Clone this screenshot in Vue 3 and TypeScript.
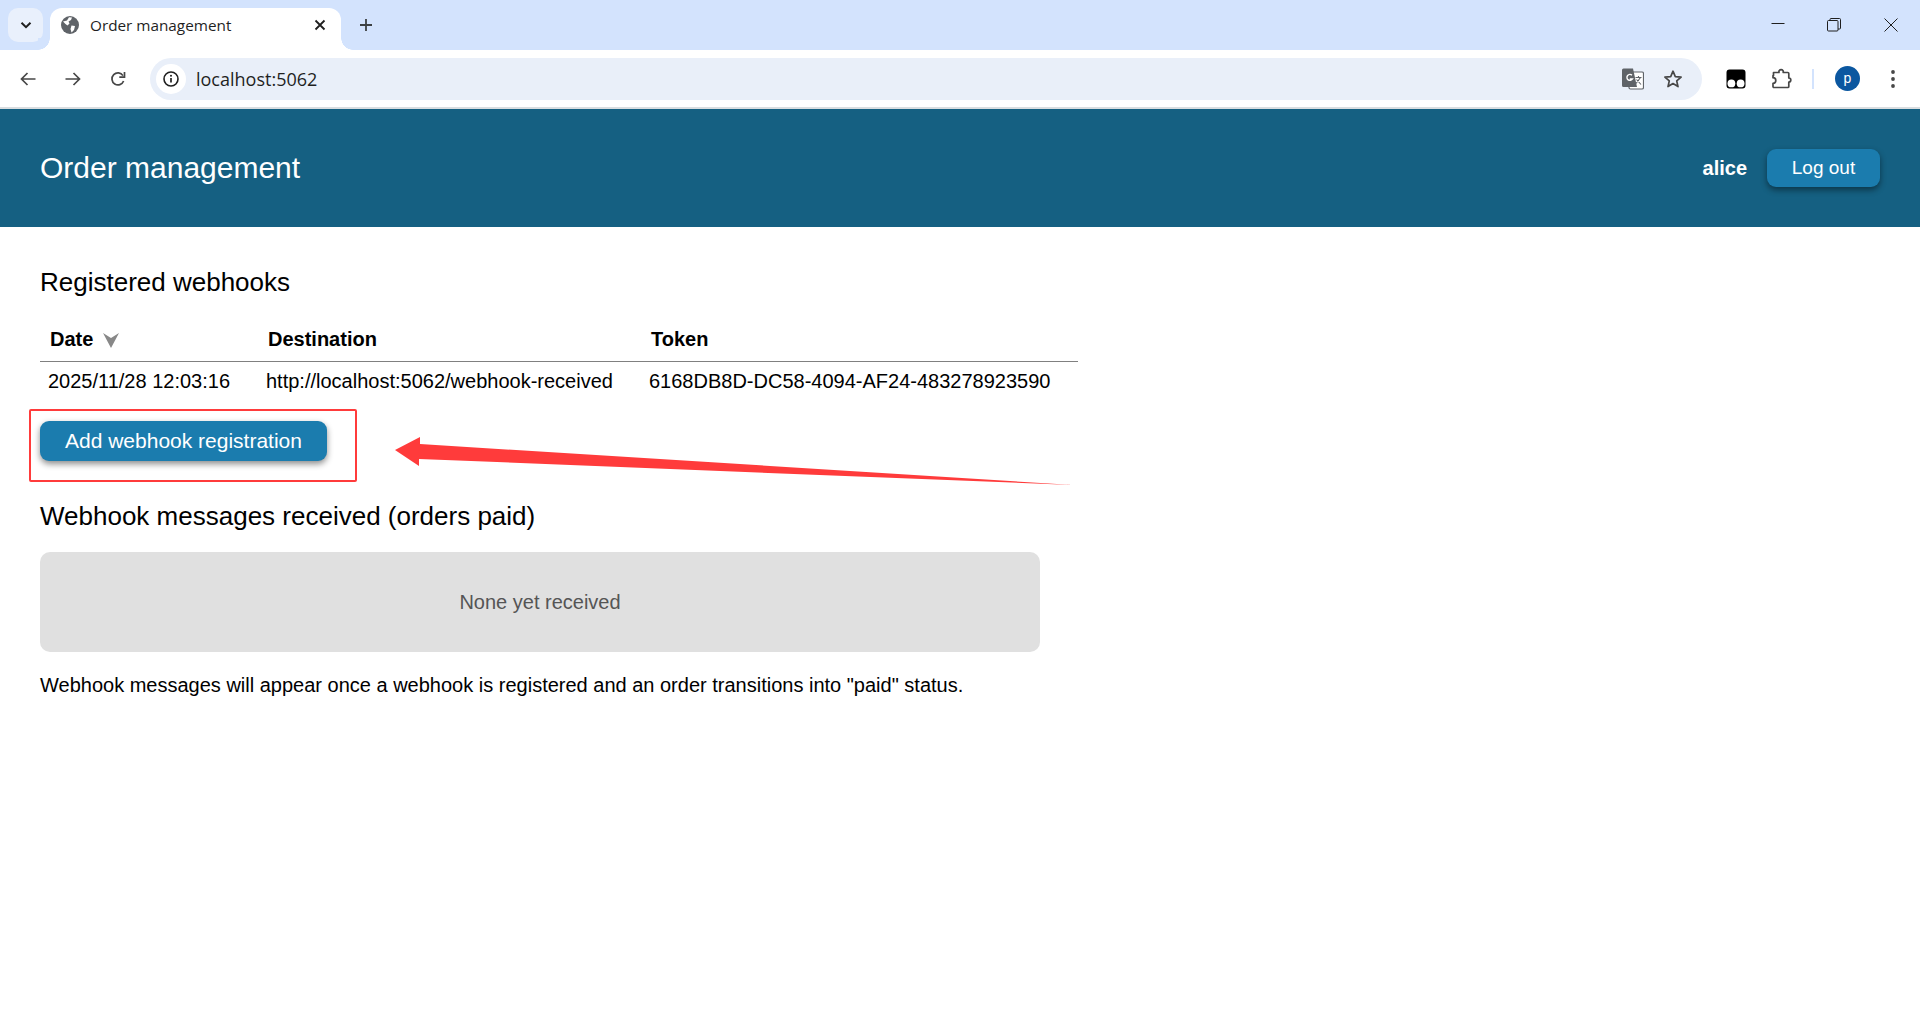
<script setup lang="ts">
const headers: string[] = ['Destination', 'Token']
const row = {
  date: '2025/11/28 12:03:16',
  destination: 'http://localhost:5062/webhook-received',
  token: '6168DB8D-DC58-4094-AF24-483278923590',
}
</script>

<template>
  <div class="page">
    <div class="tabstrip">
      <div class="tab-switch">
        <svg width="16" height="16" viewBox="0 0 16 16"><path d="M3.5 5.8 8 10.2l4.5-4.4" fill="none" stroke="#1f1f1f" stroke-width="2" /></svg>
      </div>
      <div class="tab">
        <svg class="favicon" width="18" height="18" viewBox="0 0 18 18">
          <circle cx="9" cy="9" r="9" fill="#5f6368" />
          <path d="M2 5.5 6 4.5 8 1.2 11 1.5 10 4 7.5 5.5 8.5 7.5 6.5 9.5 4.5 8ZM10.5 9.5 14 10 13 14 10.5 16.5 9.5 13Z" fill="#fff" />
        </svg>
        <span class="tab-title">Order management</span>
        <svg class="tab-close" width="12" height="12" viewBox="0 0 12 12"><path d="M1.5 1.5l9 9M10.5 1.5l-9 9" stroke="#1f1f1f" stroke-width="1.8" /></svg>
      </div>
      <svg class="plus" width="14" height="14" viewBox="0 0 14 14"><path d="M7 1v12M1 7h12" stroke="#3c4043" stroke-width="1.8" /></svg>
      <div class="win-controls">
        <svg width="14" height="14" viewBox="0 0 14 14"><path d="M0.5 5.5h13" stroke="#1f1f1f" stroke-width="1" /></svg>
        <svg class="restore" width="14" height="14" viewBox="0 0 14 14"><rect x="0.5" y="2.5" width="10.5" height="10.5" rx="1" fill="none" stroke="#1f1f1f" /><path d="M3 2.5V1.5q0-1 1-1h8.5q1 0 1 1V10q0 1-1 1h-1.5" fill="none" stroke="#1f1f1f" /></svg>
        <svg width="14" height="14" viewBox="0 0 14 14"><path d="M0.5 0.5l13 13M13.5 0.5l-13 13" stroke="#1f1f1f" stroke-width="1" /></svg>
      </div>
    </div>

    <div class="toolbar">
      <div class="nav">
        <svg width="16" height="16" viewBox="0 0 16 16"><path d="M15.5 8H1.5M7.5 2 1.5 8l6 6" fill="none" stroke="#474747" stroke-width="1.7" /></svg>
        <svg width="16" height="16" viewBox="0 0 16 16"><path d="M0.5 8h14M8.5 2l6 6-6 6" fill="none" stroke="#474747" stroke-width="1.7" /></svg>
        <svg width="16" height="16" viewBox="0 0 16 16"><path d="M13.6 10A6 6 0 1 1 13 4.6" fill="none" stroke="#474747" stroke-width="1.7" /><path d="M14.5 1v5.2H9.3" fill="none" stroke="#474747" stroke-width="1.7" /></svg>
      </div>
      <div class="omnibox">
        <div class="chip">
          <svg width="16" height="16" viewBox="0 0 16 16"><circle cx="8" cy="8" r="7" fill="none" stroke="#1f1f1f" stroke-width="1.6" /><path d="M8 7v4.5" stroke="#1f1f1f" stroke-width="1.7" /><circle cx="8" cy="4.8" r="1" fill="#1f1f1f" /></svg>
        </div>
        <span class="url">localhost:5062</span>
        <svg class="translate" width="22" height="22" viewBox="0 0 22 22">
          <rect x="7" y="4" width="14.5" height="17" rx="1.5" fill="#fff" stroke="#5f6368" stroke-width="1.2" />
          <path d="M1.5 0.5h9.5l4 18.5H1.5A1.5 1.5 0 0 1 0 17.5V2A1.5 1.5 0 0 1 1.5 0.5Z" fill="#5f6368" />
          <path d="M10 7.2A3 3 0 1 0 10.5 11H7.8" fill="none" stroke="#fff" stroke-width="1.4" />
          <path d="M13.5 9.5h6M16.5 8v1.5M18.5 9.5 14 15.5M14.5 11.5l4.5 5" fill="none" stroke="#5f6368" stroke-width="1.1" />
        </svg>
        <svg class="star" width="20" height="20" viewBox="0 0 20 20"><path d="M10 2.2l2.3 5.4 5.8.5-4.4 3.8 1.3 5.7-5-3-5 3 1.3-5.7-4.4-3.8 5.8-.5Z" fill="none" stroke="#474747" stroke-width="1.7" stroke-linejoin="round" /></svg>
      </div>
      <div class="extensions">
        <svg class="ext-black" width="20" height="20" viewBox="0 0 20 20">
          <path d="M3.5 0.5h13A3 3 0 0 1 19.5 3.5v13a3 3 0 0 1-3 3h-13a3 3 0 0 1-3-3v-13a3 3 0 0 1 3-3Z" fill="#000" />
          <circle cx="5.4" cy="14.4" r="3.9" fill="#fff" /><circle cx="14.6" cy="14.4" r="3.9" fill="#fff" />
        </svg>
        <svg class="ext-puzzle" width="22" height="22" viewBox="0 0 22 22"><path d="M2.5 7.5V4.5h5.5a2.2 2.2 0 1 1 4.2 0h4.6a1 1 0 0 1 1 1v4.5a2 2 0 1 1 0 4v4.5a1 1 0 0 1-1 1H3a1 1 0 0 1-1-1v-3.2a2.8 2.8 0 0 0 0-5.6V7.5Z" fill="none" stroke="#474747" stroke-width="1.7" stroke-linejoin="round" /></svg>
        <span class="divider"></span>
        <span class="avatar">p</span>
        <svg class="dots" width="6" height="18" viewBox="0 0 6 18"><circle cx="3" cy="2" r="1.9" fill="#474747" /><circle cx="3" cy="9" r="1.9" fill="#474747" /><circle cx="3" cy="16" r="1.9" fill="#474747" /></svg>
      </div>
    </div>

    <header class="app-header">
      <h1>Order management</h1>
      <div class="user">
        <strong>alice</strong>
        <button class="btn btn-small">Log out</button>
      </div>
    </header>

    <main class="content">
      <h2 class="first">Registered webhooks</h2>
      <table>
        <thead>
          <tr>
            <th class="col-date">
              Date
              <svg class="sort" width="16" height="15" viewBox="0 0 16 15"><path d="M0 0 8 5 16 0 8 15Z" fill="#888" /></svg>
            </th>
            <th class="col-dest">{{ headers[0] }}</th>
            <th>{{ headers[1] }}</th>
          </tr>
        </thead>
        <tbody>
          <tr>
            <td>{{ row.date }}</td>
            <td>{{ row.destination }}</td>
            <td>{{ row.token }}</td>
          </tr>
        </tbody>
      </table>
      <button class="btn btn-add">Add webhook registration</button>
      <h2>Webhook messages received (orders paid)</h2>
      <div class="empty">None yet received</div>
      <p>Webhook messages will appear once a webhook is registered and an order transitions into "paid" status.</p>
    </main>

    <div class="red-box"></div>
    <svg class="red-arrow" width="700" height="60" viewBox="390 430 700 60">
      <path d="M395 450 420 437 420 444 1073 485 419 459 419 466Z" fill="#ff3b3b" />
    </svg>
  </div>
</template>

<style scoped>
.page {
  position: relative;
  width: 1920px;
  height: 1030px;
  overflow: hidden;
  background: #fff;
  font-family: "Liberation Sans", Arial, sans-serif;
  color: #000;
}
.tabstrip {
  height: 50px;
  background: #d3e3fd;
  display: flex;
  align-items: flex-start;
  position: relative;
}
.tab-switch {
  width: 35px;
  height: 34px;
  margin: 8px 7px 0 8px;
  border-radius: 10px;
  background: #e9f0fc;
  display: flex;
  align-items: center;
  justify-content: center;
}
.tab {
  position: relative;
  width: 291px;
  height: 42px;
  margin-top: 8px;
  background: #fff;
  border-radius: 12px 12px 0 0;
  display: flex;
  align-items: center;
  box-sizing: border-box;
  padding: 0 15px 8px 11px;
}
.tab::before,
.tab::after {
  content: "";
  position: absolute;
  bottom: 0;
  width: 12px;
  height: 12px;
}
.tab::before {
  left: -12px;
  background: radial-gradient(circle at 0 0, #d3e3fd 11.5px, #fff 12px);
}
.tab::after {
  right: -12px;
  background: radial-gradient(circle at 100% 0, #d3e3fd 11.5px, #fff 12px);
}
.favicon {
  flex: none;
}
.tab-title {
  margin-left: 11px;
  font-family: "Open Sans", "Noto Sans", sans-serif;
  font-size: 15.3px;
  color: #1f1f1f;
  flex: 1;
}
.plus {
  margin: 18px 0 0 18px;
}
.win-controls {
  margin-left: auto;
  margin-right: 22px;
  width: 127px;
  margin-top: 18px;
  display: flex;
  justify-content: space-between;
}
.restore {
  position: relative;
  left: -1px;
}
.toolbar {
  height: 57px;
  background: #fff;
  border-bottom: 2px solid #d9dde0;
  border-radius: 12px 12px 0 0;
  display: flex;
  align-items: center;
  position: relative;
}
.nav {
  display: flex;
  gap: 29px;
  width: 150px;
  box-sizing: border-box;
  padding-left: 20px;
  flex: none;
}
.omnibox {
  width: 1552px;
  height: 42px;
  flex: none;
  background: #e9eff9;
  border-radius: 21px;
  display: flex;
  align-items: center;
  box-sizing: border-box;
  padding-left: 6px;
}
.chip {
  width: 30px;
  height: 30px;
  border-radius: 50%;
  background: #fff;
  display: flex;
  align-items: center;
  justify-content: center;
}
.url {
  margin-left: 10px;
  font-family: "Open Sans", "Noto Sans", sans-serif;
  font-size: 18px;
  color: #1f1f1f;
  flex: 1;
}
.star {
  margin: 0 19px 0 19px;
}
.extensions {
  display: flex;
  align-items: center;
  flex: none;
}
.ext-black {
  margin-left: 24px;
}
.ext-puzzle {
  margin-left: 25px;
}
.divider {
  width: 2px;
  height: 20px;
  background: #d3e3fd;
  margin-left: 19px;
}
.avatar {
  width: 25px;
  height: 25px;
  margin-left: 21px;
  border-radius: 50%;
  background: #0b57a0;
  color: #fff;
  font-size: 14px;
  line-height: 24px;
  text-align: center;
}
.dots {
  margin-left: 30px;
}
.app-header {
  height: 118px;
  background: #156082;
  display: flex;
  align-items: center;
  justify-content: space-between;
  padding: 0 40px;
  color: #fff;
}
h1 {
  margin: 0;
  font-size: 30px;
  font-weight: 400;
}
.user {
  display: flex;
  align-items: center;
  gap: 20px;
  font-size: 20px;
}
.btn {
  border: none;
  color: #fff;
  background: #1b7cae;
  border-radius: 9px;
  font-family: inherit;
  box-shadow: 0 3px 6px rgba(0, 0, 0, 0.45);
  padding: 0;
}
.btn-small {
  width: 113px;
  height: 38px;
  font-size: 19px;
}
.content {
  padding: 0 40px;
}
h2 {
  margin: 40px 0 0;
  font-size: 26px;
  font-weight: 400;
  line-height: 30px;
}
table {
  margin-top: 21px;
  border-collapse: collapse;
  width: 1038px;
  font-size: 20px;
}
th {
  text-align: left;
  font-weight: 700;
  height: 43px;
  padding: 0 10px;
  border-bottom: 1px solid #808080;
  white-space: nowrap;
}
td {
  height: 37px;
  padding: 1px 8px 0;
  white-space: nowrap;
}
.col-date {
  width: 198px;
}
.col-dest {
  width: 363px;
}
.sort {
  margin-left: 4px;
  vertical-align: -2px;
}
.btn-add {
  display: block;
  margin-top: 21px;
  width: 287px;
  height: 40px;
  font-size: 21px;
}
.empty {
  margin-top: 21px;
  width: 1000px;
  height: 100px;
  border-radius: 10px;
  background: #e0e0e0;
  color: #555;
  font-size: 20px;
  display: flex;
  align-items: center;
  justify-content: center;
}
p {
  margin: 21px 0 0;
  font-size: 20px;
  line-height: 24px;
}
.red-box {
  position: absolute;
  left: 29px;
  top: 409px;
  width: 328px;
  height: 73px;
  box-sizing: border-box;
  border: 2px solid #ff3b3b;
  border-radius: 2px;
}
.red-arrow {
  position: absolute;
  left: 390px;
  top: 430px;
}
</style>
